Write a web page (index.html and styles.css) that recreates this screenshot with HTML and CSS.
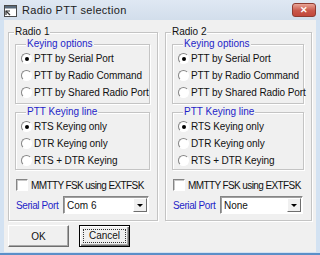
FILE: index.html
```html
<!DOCTYPE html>
<html lang="en">
<head>
  <meta charset="UTF-8" />
  <title>Radio PTT selection</title>
  <link rel="stylesheet" href="styles.css">
</head>
<body>
  <div class="window">
    <div class="titlebar">
      <svg class="app-icon" width="13" height="12" viewBox="0 0 13 12">
        <rect x="0.5" y="0.5" width="12" height="11" fill="#fff" stroke="#4a4a4a"/>
        <rect x="1" y="1" width="11" height="2.5" fill="#5a6b7c"/>
        <path d="M2 10 L2 6 L6 6" fill="none" stroke="#333" stroke-width="1.2"/>
        <path d="M2 6 L6 10" stroke="#333" stroke-width="1.2"/>
      </svg>
      <span class="title">Radio PTT selection</span>
      <div class="close-btn">&#x2715;</div>
    </div>

    <div class="frame">
      <div class="client">
        <div class="groups">
          <!-- Radio 1 -->
          <fieldset class="outer radio1">
            <legend>Radio 1</legend>
            <fieldset class="inner">
              <legend>Keying options</legend>
              <div class="opt"><span class="radio checked"></span>PTT by Serial Port</div>
              <div class="opt"><span class="radio"></span>PTT by Radio Command</div>
              <div class="opt"><span class="radio"></span>PTT by Shared Radio Port</div>
            </fieldset>
            <fieldset class="inner second">
              <legend>PTT Keying line</legend>
              <div class="opt"><span class="radio checked"></span>RTS Keying only</div>
              <div class="opt"><span class="radio"></span>DTR Keying only</div>
              <div class="opt"><span class="radio"></span>RTS + DTR Keying</div>
            </fieldset>
            <div class="check-row"><span class="checkbox"></span>MMTTY FSK using EXTFSK</div>
            <div class="port-row">
              <span class="port-label">Serial Port</span>
              <div class="combo"><span class="combo-text">Com 6</span><span class="combo-btn"></span></div>
            </div>
          </fieldset>

          <!-- Radio 2 -->
          <fieldset class="outer radio2">
            <legend>Radio 2</legend>
            <fieldset class="inner">
              <legend>Keying options</legend>
              <div class="opt"><span class="radio checked"></span>PTT by Serial Port</div>
              <div class="opt"><span class="radio"></span>PTT by Radio Command</div>
              <div class="opt"><span class="radio"></span>PTT by Shared Radio Port</div>
            </fieldset>
            <fieldset class="inner second">
              <legend>PTT Keying line</legend>
              <div class="opt"><span class="radio checked"></span>RTS Keying only</div>
              <div class="opt"><span class="radio"></span>DTR Keying only</div>
              <div class="opt"><span class="radio"></span>RTS + DTR Keying</div>
            </fieldset>
            <div class="check-row"><span class="checkbox"></span>MMTTY FSK using EXTFSK</div>
            <div class="port-row">
              <span class="port-label">Serial Port</span>
              <div class="combo"><span class="combo-text">None</span><span class="combo-btn"></span></div>
            </div>
          </fieldset>
        </div>

        <div class="buttons">
          <button class="btn ok">OK</button>
          <button class="btn cancel"><span class="focus">Cancel</span></button>
        </div>
      </div>
    </div>
  </div>
</body>
</html>
```

FILE: styles.css
```css
:root {
  --face: #f0f0f0;
  --line: #c4c4c4;
  --blue: #1f1fc8;
  --text: #111;
}

* {
  box-sizing: border-box;
}

body {
  margin: 0;
  width: 320px;
  height: 255px;
  overflow: hidden;
  background: #d3e2f2;
  font-family: "Liberation Sans", Arial, sans-serif;
  font-size: 10px;
  color: var(--text);
}

.window {
  height: 255px;
  display: flex;
  flex-direction: column;
}

.titlebar {
  height: 20px;
  display: flex;
  align-items: center;
  padding: 0 4px 0 4px;
  background: linear-gradient(#dfe8f3, #d2deeb);
}

.app-icon {
  flex: none;
  margin-top: 1px;
}

.title {
  margin-left: 5px;
  font-size: 11px;
  letter-spacing: 0.3px;
  color: #222;
}

.close-btn {
  margin-left: auto;
  width: 24px;
  height: 14px;
  border: 1px solid #8e3b31;
  border-radius: 3px;
  background: linear-gradient(#e9a597, #c9574a 55%, #c2473a);
  color: #fff;
  font-size: 9px;
  font-weight: bold;
  line-height: 12px;
  text-align: center;
}

.frame {
  flex: 1;
  padding: 0 4px 1px 4px;
  border-bottom: 2px solid #5b8fc8;
}

.client {
  height: 100%;
  background: var(--face);
  padding: 6px 4px 0 4px;
}

.groups {
  display: flex;
  gap: 7px;
}

fieldset {
  margin: 0;
  min-width: 0;
  border: 1px solid var(--line);
  box-shadow: inset 1px 1px #fff, 1px 1px #fff;
}

legend {
  line-height: 12px;
  padding: 0 1px;
  background: var(--face);
}

.outer {
  padding: 0 7px 6px 6px;
}

.radio1 {
  width: 150px;
}

.radio2 {
  width: 147px;
}

.outer > legend {
  margin-left: -1px;
}

.inner {
  padding: 0 4px 2px 6px;
}

.inner > legend {
  margin-left: 4px;
  color: var(--blue);
}

.inner.second {
  margin-top: 2px;
  padding-bottom: 0;
}

.opt {
  height: 17px;
  display: flex;
  align-items: center;
  gap: 2px;
  white-space: nowrap;
  letter-spacing: -0.1px;
}

.radio {
  flex: none;
  width: 11px;
  height: 11px;
  margin-left: -1px;
  border-radius: 50%;
  border: 1px solid;
  border-color: #858585 #fff #fff #858585;
  background: #fff;
  display: flex;
  align-items: center;
  justify-content: center;
}

.radio.checked::after {
  content: "";
  width: 4px;
  height: 4px;
  border-radius: 50%;
  background: #000;
}

.check-row {
  margin-top: 6px;
  height: 18px;
  display: flex;
  align-items: center;
  gap: 3px;
  white-space: nowrap;
  letter-spacing: -0.6px;
}

.checkbox {
  flex: none;
  width: 12px;
  height: 12px;
  margin-left: 1px;
  border: 1px solid;
  border-color: #858585 #fff #fff #858585;
  box-shadow: inset 1px 1px #c8c8c8;
  background: #fff;
}

.port-row {
  margin-top: 2px;
  height: 18px;
  display: flex;
  align-items: center;
}

.port-label {
  width: 47px;
  flex: none;
  color: var(--blue);
  margin-left: 1px;
  letter-spacing: -0.4px;
}

.combo {
  flex: 1;
  height: 18px;
  margin-right: 1px;
  display: flex;
  align-items: center;
  border: 1px solid;
  border-color: #858585 #fff #fff #858585;
  box-shadow: inset 1px 1px #a0a0a0;
  background: #fff;
}

.combo-text {
  flex: 1;
  padding-left: 3px;
}

.combo-btn {
  width: 14px;
  height: 14px;
  margin-right: 1px;
  border: 1px solid;
  border-color: #fff #6e6e6e #6e6e6e #fff;
  background: var(--face);
  display: flex;
  align-items: center;
  justify-content: center;
}

.combo-btn::after {
  content: "";
  border-left: 3px solid transparent;
  border-right: 3px solid transparent;
  border-top: 3px solid #000;
}

.buttons {
  display: flex;
  gap: 10px;
  margin-top: 4px;
}

.btn {
  height: 22px;
  padding: 0;
  font-family: inherit;
  font-size: 10px;
  color: var(--text);
  background: var(--face);
  border: 1px solid;
  border-color: #fff #6e6e6e #6e6e6e #fff;
  box-shadow: inset -1px -1px #a8a8a8;
  border-radius: 0;
}

.ok {
  width: 61px;
}

.cancel {
  width: 51px;
  border-color: #000;
  box-shadow: inset 1px 1px #fff, inset -1px -1px #6e6e6e, inset -2px -2px #a8a8a8;
  display: flex;
  padding: 3px;
}

.focus {
  flex: 1;
  border: 1px dotted #333;
  line-height: 12px;
}
```
